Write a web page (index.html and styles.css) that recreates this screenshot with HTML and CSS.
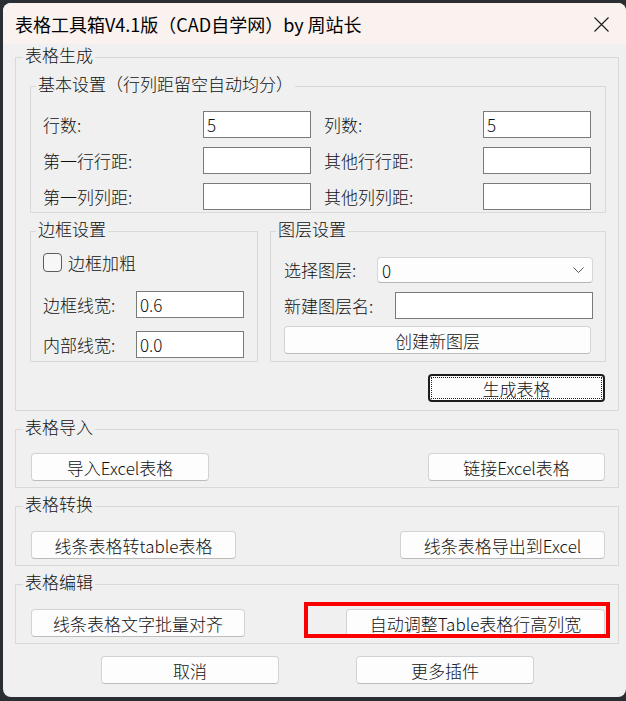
FILE: index.html
```html
<!DOCTYPE html>
<html lang="zh-CN">
<head>
  <meta charset="UTF-8" />
  <meta name="viewport" content="width=device-width, initial-scale=1.0"/>
  <title>表格工具箱</title>
  <link rel="stylesheet" href="styles.css">
</head>
<body>
  <div class="window">
    <!-- 标题栏 -->
    <div class="titlebar">
      <span class="title">表格工具箱V4.1版（CAD自学网）by 周站长</span>
      <svg class="close" width="15" height="15" viewBox="0 0 15 15">
        <path d="M0.5 0.5 L14.5 14.5 M14.5 0.5 L0.5 14.5" stroke="#1a1a1a" stroke-width="1.1" fill="none"/>
      </svg>
    </div>

    <div class="content">
      <!-- 表格生成 -->
      <fieldset class="group">
        <legend>表格生成</legend>
        <div class="group-body gen-body">
          <fieldset class="group">
            <legend class="sub">基本设置（行列距留空自动均分）</legend>
            <div class="group-body basic-body">
              <div class="basic-grid">
                <label>行数:</label><input class="txt" value="5"><span></span>
                <label>列数:</label><input class="txt" value="5">
                <label>第一行行距:</label><input class="txt" value=""><span></span>
                <label>其他行行距:</label><input class="txt" value="">
                <label>第一列列距:</label><input class="txt" value=""><span></span>
                <label>其他列列距:</label><input class="txt" value="">
              </div>
            </div>
          </fieldset>

          <div class="pair">
            <fieldset class="group">
              <legend class="sub">边框设置</legend>
              <div class="group-body border-body">
                <div class="check-row"><span class="checkbox"></span><span>边框加粗</span></div>
                <div class="field-row first"><label class="lbl-border">边框线宽:</label><input class="txt" value="0.6"></div>
                <div class="field-row second"><label class="lbl-border">内部线宽:</label><input class="txt" value="0.0"></div>
              </div>
            </fieldset>
            <fieldset class="group">
              <legend class="sub">图层设置</legend>
              <div class="group-body layer-body">
                <div class="field-row">
                  <label class="lbl-layer">选择图层:</label>
                  <div class="combo">
                    <span>0</span>
                    <svg width="11" height="6" viewBox="0 0 11 6"><polyline points="0.5,0.5 5.5,5.5 10.5,0.5" fill="none" stroke="#555" stroke-width="1"/></svg>
                  </div>
                </div>
                <div class="field-row new-layer"><label class="lbl-layer2">新建图层名:</label><input class="txt grow" value=""></div>
                <button class="btn wide">创建新图层</button>
              </div>
            </fieldset>
          </div>

          <div class="gen-actions">
            <button class="btn btn-default">生成表格</button>
          </div>
        </div>
      </fieldset>

      <!-- 表格导入 -->
      <fieldset class="group block">
        <legend>表格导入</legend>
        <div class="group-body btn-row">
          <button class="btn" style="width: 178px">导入Excel表格</button>
          <button class="btn" style="width: 177px">链接Excel表格</button>
        </div>
      </fieldset>

      <!-- 表格转换 -->
      <fieldset class="group block">
        <legend>表格转换</legend>
        <div class="group-body btn-row">
          <button class="btn" style="width: 205px">线条表格转table表格</button>
          <button class="btn" style="width: 205px">线条表格导出到Excel</button>
        </div>
      </fieldset>

      <!-- 表格编辑 -->
      <fieldset class="group block">
        <legend>表格编辑</legend>
        <div class="group-body btn-row edit-row">
          <button class="btn" style="width: 214px">线条表格文字批量对齐</button>
          <button class="btn" style="width: 259px">自动调整Table表格行高列宽</button>
          <div class="mark"></div>
        </div>
      </fieldset>

      <div class="footer">
        <button class="btn">取消</button>
        <button class="btn">更多插件</button>
      </div>
    </div>
  </div>
</body>
</html>
```

FILE: styles.css
```css
body {
  margin: 0;
  background-color: #2a2d32;
  font-family: "Noto Sans CJK SC", sans-serif;
}
.window {
  margin: 3px 0 0 3px;
  width: 623px;
  height: 694px;
  border-radius: 8px;
  overflow: hidden;
  background-color: #f0f0f0;
  color: #111;
}
.titlebar {
  height: 41px;
  background-color: #faf2ef;
  display: flex;
  align-items: center;
  justify-content: space-between;
  padding: 0 17px 0 12px;
}
.title {
  font-size: 18px;
  line-height: 24px;
  color: #000;
}
.close {
  display: block;
  margin-top: 1px;
}
.content {
  padding: 0 7px 0 12px;
  font-size: 17px;
  font-weight: 300;
}

/* 分组框 */
.group {
  margin: 0;
  padding: 0;
  border: 1px solid #d9d9d9;
  min-width: 0;
}
.group legend {
  margin-left: 7px;
  padding: 0 2px 4px;
  font-size: 17px;
  line-height: 22px;
}
.group legend.sub {
  margin-left: 5px;
}
.block {
  margin-top: 5px;
}
.gen-body {
  padding: 3px 12px 8px 14px;
}
.basic-body {
  padding: 12px 14px 2px 12px;
}
.basic-grid {
  display: grid;
  grid-template-columns: 160px 108px 13px 159px 108px;
  grid-auto-rows: 27px;
  row-gap: 9px;
  align-items: center;
}
label {
  line-height: 22px;
}
.txt {
  box-sizing: border-box;
  height: 27px;
  width: 108px;
  border: 1px solid #7a7a7a;
  background: #fff;
  padding: 0 3px;
  margin: 0;
  font-family: "Noto Sans CJK SC", sans-serif;
  font-size: 17px;
  font-weight: 300;
  color: #111;
  outline: none;
}
.pair {
  margin-top: 5px;
  display: grid;
  grid-template-columns: 228px 336px;
  column-gap: 12px;
}
.border-body {
  padding: 9px 13px 3px 12px;
}
.check-row {
  display: flex;
  align-items: center;
  gap: 6px;
  height: 19px;
}
.checkbox {
  box-sizing: border-box;
  width: 19px;
  height: 19px;
  border: 1px solid #5c5c5c;
  border-radius: 4px;
  background: #f7f7f7;
}
.field-row {
  display: flex;
  align-items: center;
}
.field-row.first {
  margin-top: 19px;
}
.field-row.second {
  margin-top: 13px;
}
.lbl-border {
  width: 94px;
}
.layer-body {
  padding: 13px 12px 7px 13px;
}
.lbl-layer {
  width: 93px;
}
.lbl-layer2 {
  width: 111px;
}
.combo {
  box-sizing: border-box;
  width: 216px;
  height: 26px;
  border: 1px solid #d6d6d6;
  border-bottom-color: #b5b5b5;
  border-radius: 4px;
  background: #fdfdfd;
  display: flex;
  align-items: center;
  justify-content: space-between;
  padding: 0 8px 0 4px;
}
.combo svg {
  display: block;
}
.new-layer {
  margin-top: 9px;
}
.grow {
  flex: 1;
}
.btn {
  box-sizing: border-box;
  height: 28px;
  margin: 0;
  padding: 0;
  border: 1px solid #d3d3d3;
  border-bottom-color: #bcbcbc;
  border-radius: 4px;
  background: #fdfdfd;
  font-family: "Noto Sans CJK SC", sans-serif;
  font-size: 17px;
  font-weight: 300;
  color: #111;
}
.btn.wide {
  display: block;
  width: 307px;
  margin-top: 7px;
}
.gen-actions {
  margin-top: 12px;
  display: flex;
  justify-content: flex-end;
  padding-right: 1px;
}
.btn-default {
  width: 177px;
  border: 2px solid #1d1d1d;
  outline: 1px dotted #222;
  outline-offset: -4px;
}
.btn-row {
  display: flex;
  justify-content: space-between;
  padding: 11px 13px 6px 15px;
}
.block + .block .btn-row {
  padding-top: 12px;
}
.edit-row {
  position: relative;
}
.mark {
  position: absolute;
  left: 288px;
  top: 5px;
  width: 306px;
  height: 36px;
  box-sizing: border-box;
  border: 4px solid #fb0000;
}
.footer {
  margin-top: 12px;
  display: flex;
  gap: 77px;
  padding-left: 86px;
}
.footer .btn {
  width: 178px;
}
```
